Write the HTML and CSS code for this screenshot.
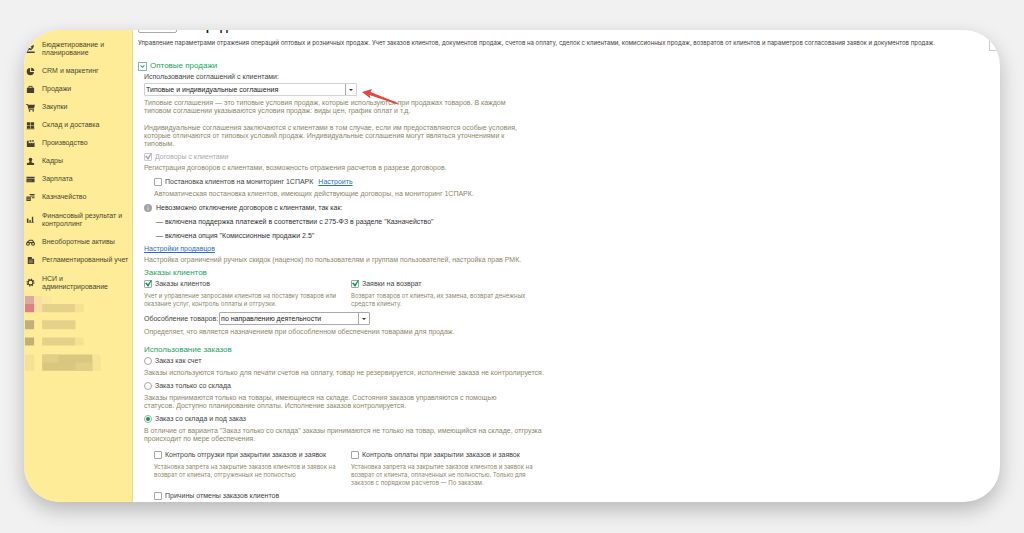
FILE: index.html
```html
<!DOCTYPE html>
<html lang="ru">
<head>
<meta charset="utf-8">
<title>Продажи</title>
<link rel="stylesheet" href="styles.css">
</head>
<body>
<div class="window">
  <nav class="sidebar">
    <a class="nav-item tall" href="#"><svg viewBox="0 0 10 10"><path d="M1 9h8v.8H1zM1 8l3-2.500 1.500.8L8 3.500" fill="none" stroke="#444032" stroke-width="1.200"/><path d="M5 3l3-2 1 1-2 3zM2 4.500h3v1H2z"/></svg><span>Бюджетирование и<br>планирование</span></a>
    <a class="nav-item" href="#"><svg viewBox="0 0 10 10"><path d="M4.500 1.200V5.500h4.300A4 4 0 1 1 4.500 1.200zM5.700.8A3.800 3.800 0 0 1 9.300 4.400H5.700z"/></svg><span>CRM и маркетинг</span></a>
    <a class="nav-item" href="#"><svg viewBox="0 0 10 10"><path d="M1 3h8v6H1z"/><path d="M3.200 5V1.500h3.600V5" fill="none" stroke="#444032"/></svg><span>Продажи</span></a>
    <a class="nav-item" href="#"><svg viewBox="0 0 10 10"><path d="M0 1h2l.5 1H10L8.800 6H3.500l.2.800H9v.8H3L1.400 2H0z"/><circle cx="4" cy="8.800" r=".9"/><circle cx="8" cy="8.800" r=".9"/></svg><span>Закупки</span></a>
    <a class="nav-item" href="#"><svg viewBox="0 0 10 10"><path d="M1 1.500h3.700v3.200H1zM5.300 1.500H9v3.200H5.300zM1 5.200h3.700v3H1zM5.300 5.200H9v3H5.300zM.5 8.600h9v.6h-9z"/></svg><span>Склад и доставка</span></a>
    <a class="nav-item" href="#"><svg viewBox="0 0 10 10"><path d="M1 9V2h2v3l2-1v1l2-1v1l2.500-1v5zM4 1.500h2v1.500H4zM7 1h1.500v2H7z"/></svg><span>Производство</span></a>
    <a class="nav-item" href="#"><svg viewBox="0 0 10 10"><circle cx="5" cy="2.800" r="2"/><path d="M4 4h2l.4 2L9 7v2H1V7l2.600-1z"/></svg><span>Кадры</span></a>
    <a class="nav-item" href="#"><svg viewBox="0 0 10 10"><path d="M.5 2h9v2h-9zM.5 4.500h9V8h-9z"/><path d="M1.500 6.500h5" stroke="#b9ac70" stroke-width=".6"/></svg><span>Зарплата</span></a>
    <a class="nav-item" href="#"><svg viewBox="0 0 10 10"><path d="M4 1h5.500v1.200H4zM5 2.800h4.500V4H5zM6.500 4.600h3v1.200h-3zM.5 4h4.800v5H.5z"/><path d="M1.500 5.500h2.800M1.500 7.300h2.800" stroke="#d8ca83" stroke-width=".7"/></svg><span>Казначейство</span></a>
    <a class="nav-item tall" href="#"><svg viewBox="0 0 10 10"><path d="M1 4h1.700v4H1zM3.800 5.500h1.500V8H3.800zM6.500 2H8v6H6.500zM1 8.300h8V9H1z"/></svg><span>Финансовый результат и<br>контроллинг</span></a>
    <a class="nav-item" href="#"><svg viewBox="0 0 10 10"><g fill="none" stroke="#444032" stroke-width="1.200"><circle cx="2.200" cy="6.500" r="1.600"/><circle cx="7.800" cy="6.500" r="1.600"/><path d="M1.500 4.500L4 2.500h3l1.500 2M3 5h4"/></g></svg><span>Внеоборотные активы</span></a>
    <a class="nav-item" href="#"><svg viewBox="0 0 10 10"><path d="M2 1h4.500v2H9v6H2z"/><path d="M3.200 4.500h4.400M3.200 6h4.400M3.200 7.500h4.400" stroke="#d8ca83" stroke-width=".6"/></svg><span>Регламентированный учет</span></a>
    <a class="nav-item tall" href="#"><svg viewBox="0 0 10 10"><g fill="none" stroke="#444032"><circle cx="5" cy="5" r="2.700" stroke-width="1.300"/><circle cx="5" cy="5" r="3.800" stroke-width="1.300" stroke-dasharray="1.500 1.484"/></g></svg><span>НСИ и<br>администрирование</span></a>
    <svg class="mosaic" viewBox="0 0 107 76" aria-hidden="true">
      <path fill="#d9aaa0" d="M1 0h9v8H1z"/><path fill="#e08086" d="M1 8h9v8H1z"/>
      <path fill="#f8e1a0" d="M10 0h8v8h-8zM10 8h8v8h-8z"/><path fill="#fae8a0" d="M18 0h10v8H18z"/>
      <path fill="#e4d28a" d="M18 8h33v8H18zM18 24h33v9H18zM18 41h33v8H18z"/>
      <path fill="#f4e294" d="M51 8h8v8h-8zM51 41h8v8h-8z"/>
      <path fill="#c3b077" d="M1 24h9v9H1zM1 41h9v8H1z"/>
      <path fill="#f3e195" d="M1 58h9v16H1z"/><path fill="#d9c780" d="M18 58h50v16H18z"/><path fill="#e1cf88" d="M18 58h16v8H18zM51 66h17v8H51z"/><path fill="#f6e598" d="M68 58h8v16h-8z"/>
    </svg>
  </nav>

  <main class="content">
    <header class="titlebar"><button class="nav-button" type="button" aria-label="Назад"></button><h1>Продажи</h1></header>
    <div class="intro">
      <p>Управление параметрами отражения операций оптовых и розничных продаж. Учет заказов клиентов, документов продаж, счетов на оплату, сделок с клиентами, комиссионных продаж, возвратов от клиентов и параметров согласования заявок и документов продаж.</p>
      <button class="corner-button" type="button" aria-label="Ещё"></button>
    </div>

    <div class="group-head"><button class="toggle" type="button" aria-label="Свернуть"><svg viewBox="0 0 9 9"><path d="M2 3l2.500 2.500L7 3" fill="none" stroke="#2fa873" stroke-width="1.300"/></svg></button><h2>Оптовые продажи</h2></div>

    <div class="settings">
      <section>
        <label class="caption" for="agreements">Использование соглашений с клиентами:</label>
        <div class="agreements-row">
          <span class="combo wide"><select id="agreements"><option>Типовые и индивидуальные соглашения</option></select></span>
          <svg class="pointer" viewBox="0 0 38 16" aria-hidden="true"><path d="M0 3L10 0 8.500 3 36 14 35.500 15.500 7.500 6 8.500 9.500z" fill="#e8463a"/></svg>
        </div>
        <p class="hint">Типовые соглашения — это типовые условия продаж, которые используются при продажах товаров. В каждом<br>типовом соглашении указываются условия продаж: виды цен, график оплат и т.д.</p>
        <p class="hint apart">Индивидуальные соглашения заключаются с клиентами в том случае, если им предоставляются особые условия,<br>которые отличаются от типовых условий продаж. Индивидуальные соглашения могут являться уточнениями к<br>типовым.</p>
        <label class="option muted"><input type="checkbox" checked disabled>Договоры с клиентами</label>
        <p class="hint">Регистрация договоров с клиентами, возможность отражения расчетов в разрезе договоров.</p>
        <div class="nested">
          <div class="option-row"><label class="option"><input type="checkbox">Постановка клиентов на мониторинг 1СПАРК</label><a href="#">Настроить</a></div>
          <p class="hint">Автоматическая постановка клиентов, имеющих действующие договоры, на мониторинг 1СПАРК.</p>
        </div>
        <div class="notice">
          <svg viewBox="0 0 8 8" aria-hidden="true"><circle cx="4" cy="4" r="4" fill="#a3a3a3"/><path d="M3.500 1.500h1v1h-1zM3.500 3.200h1v3h-1z" fill="#ddd"/></svg>
          <div><p>Невозможно отключение договоров с клиентами, так как:</p><p>— включена поддержка платежей в соответствии с 275-ФЗ в разделе "Казначейство"</p><p>— включена опция "Комиссионные продажи 2.5"</p></div>
        </div>
        <p class="link-row"><a href="#">Настройки продавцов</a></p>
        <p class="hint">Настройка ограничений ручных скидок (наценок) по пользователям и группам пользователей, настройка прав РМК.</p>
      </section>

      <section class="orders">
        <h2>Заказы клиентов</h2>
        <div class="columns">
          <div><label class="option"><input type="checkbox" checked>Заказы клиентов</label><p class="hint">Учет и управление запросами клиентов на поставку товаров или<br>оказание услуг, контроль оплаты и отгрузки.</p></div>
          <div><label class="option"><input type="checkbox" checked>Заявки на возврат</label><p class="hint">Возврат товаров от клиента, их замена, возврат денежных<br>средств клиенту.</p></div>
        </div>
        <div class="field"><label for="separation">Обособление товаров:</label><span class="combo"><select id="separation"><option>по направлению деятельности</option></select></span></div>
        <p class="hint">Определяет, что является назначением при обособленном обеспечении товарами для продаж.</p>
      </section>

      <section class="usage">
        <h2>Использование заказов</h2>
        <label class="option"><input type="radio" name="usage">Заказ как счет</label>
        <p class="hint">Заказы используются только для печати счетов на оплату, товар не резервируется, исполнение заказа не контролируется.</p>
        <label class="option"><input type="radio" name="usage">Заказ только со склада</label>
        <p class="hint">Заказы принимаются только на товары, имеющиеся на складе. Состояния заказов управляются с помощью<br>статусов. Доступно планирование оплаты. Исполнение заказов контролируется.</p>
        <label class="option"><input type="radio" name="usage" checked>Заказ со склада и под заказ</label>
        <p class="hint">В отличие от варианта "Заказ только со склада" заказы принимаются не только на товар, имеющийся на складе, отгрузка<br>происходит по мере обеспечения.</p>
        <div class="nested controls">
          <div class="columns">
            <div><label class="option"><input type="checkbox">Контроль отгрузки при закрытии заказов и заявок</label><p class="hint">Установка запрета на закрытие заказов клиентов и заявок на<br>возврат от клиента, отгруженных не полностью</p></div>
            <div><label class="option"><input type="checkbox">Контроль оплаты при закрытии заказов и заявок</label><p class="hint">Установка запрета на закрытие заказов клиентов и заявок на<br>возврат от клиента, оплаченных не полностью. Только для<br>заказов с порядком расчетов — По заказам.</p></div>
          </div>
          <label class="option"><input type="checkbox">Причины отмены заказов клиентов</label>
        </div>
      </section>
    </div>
  </main>
</div>
</body>
</html>
```
FILE: styles.css
```css
* { box-sizing: border-box; }

body {
  margin: 0;
  height: 100vh;
  padding: 30px 24px 31px;
  background: #f1f1f1;
  color: #444;
  font: 7px/8px "Liberation Sans", Arial, sans-serif;
}

p, h1, h2 { margin: 0; }
button { padding: 0; background: #fff; border: 1px solid #aaa; }
a { color: #2b6cc4; }

.window {
  display: flex;
  height: 100%;
  overflow: hidden;
  background: #fff;
  border-radius: 36px;
  box-shadow: 0 8px 20px rgba(0, 0, 0, .24);
}

.sidebar {
  flex: 0 0 109px;
  padding-top: 5px;
  background: #feec98;
  border-right: 1px solid #ead990;
  white-space: nowrap;
}

.nav-item {
  display: flex;
  align-items: center;
  gap: 7px;
  height: 18px;
  padding-left: 2px;
  color: #4b4632;
  text-decoration: none;
}
.nav-item.tall { height: 27px; }
.nav-item svg { flex: none; width: 9px; height: 9px; fill: #444032; }
.mosaic { display: block; width: 100%; }

.content { flex: 1; min-width: 0; padding-left: 5px; white-space: nowrap; }

.titlebar { display: flex; gap: 20px; height: 14px; margin-top: -11px; }
.nav-button { width: 39px; height: 14px; border-radius: 2px; }
.titlebar h1 { font-size: 12px; line-height: 14px; color: #222; }

.intro { display: flex; justify-content: space-between; padding-top: 6px; }
.intro p { color: #3c3c3c; }
.intro p,
.columns .hint { font: 6px/8px Inter, "Liberation Sans", Arial, sans-serif; }
.corner-button { flex: none; width: 11px; height: 12px; border-color: #ccc; }

h2 { color: #1ba362; font-size: 8px; line-height: 10px; font-weight: normal; }

.group-head { display: flex; align-items: center; gap: 3px; margin-top: 10px; }
.toggle { width: 9px; height: 9px; border-color: #8fb3a3; }
.toggle svg { display: block; width: 7px; height: 7px; }

.settings { padding-left: 6px; }
.caption { display: block; margin-top: 2px; }
.agreements-row { position: relative; display: flex; margin-top: 2px; }
.pointer { position: absolute; left: 218px; top: 6px; width: 38px; height: 16px; }

.combo { position: relative; display: block; width: 151px; }
.combo.wide { width: 213px; }
.combo select {
  display: block;
  width: 100%;
  height: 13px;
  padding: 0 12px 0 1px;
  appearance: none;
  background: #fff;
  border: 1px solid #aaa;
  border-radius: 1px;
  color: #222;
  font: inherit;
}
.combo.wide select { border-color: #d2d2d2; }
.combo::before {
  content: "";
  position: absolute;
  right: 11px;
  top: 1px;
  bottom: 1px;
  border-left: 1px solid #aaa;
}
.combo::after {
  content: "";
  position: absolute;
  right: 4px;
  top: 6px;
  border: 2px solid transparent;
  border-top-color: #333;
  border-bottom: 0;
}

.hint { margin-top: 3px; color: #8b8769; }
.hint.apart { margin-top: 9px; }

.option { display: flex; align-items: center; gap: 3px; height: 8px; }
.option.muted { margin-top: 5px; color: #aaa; }
.option-row { display: flex; gap: 5px; }
.nested { padding-left: 10px; margin-top: 6px; }
.option-row + .hint { margin-top: 4px; }

input {
  position: relative;
  flex: none;
  width: 8px;
  height: 8px;
  margin: 0;
  appearance: none;
  background: #fff;
  border: 1px solid #a5a5a5;
  border-radius: 1px;
}
input[type="radio"] { border-radius: 50%; }
input[type="checkbox"]:checked::before {
  content: "";
  position: absolute;
  inset: -1px -1px 0 0;
  background: #079a55;
  clip-path: polygon(0 45%, 20% 35%, 42% 62%, 85% 0, 100% 5%, 45% 100%);
}
input:disabled { border-color: #ccc; }
input[type="checkbox"]:disabled::before { background: #aaa; }
input[type="radio"]:checked::before {
  content: "";
  position: absolute;
  inset: 1px;
  border-radius: 50%;
  background: #079a55;
}

.notice { display: flex; gap: 4px; margin-top: 6px; color: #333; }
.notice svg { flex: none; width: 8px; height: 8px; }
.notice p + p { margin-top: 6px; }
.link-row { margin-top: 5px; }

.orders { margin-top: 4px; }
.columns { display: grid; grid-template-columns: 207px 1fr; }
.orders .columns { margin-top: 2px; }
.columns .hint { margin-top: 4px; }
.field { display: flex; align-items: center; gap: 1px; margin-top: 4px; }

.usage { margin-top: 9px; }
.usage > .option { margin-top: 5px; }
.usage > h2 + .option { margin-top: 2px; }
.usage > .hint { margin-top: 4px; }
.controls { margin-top: 8px; }
.controls .columns { grid-template-columns: 197px 1fr; }
.controls > .option { margin-top: 5px; }
```
